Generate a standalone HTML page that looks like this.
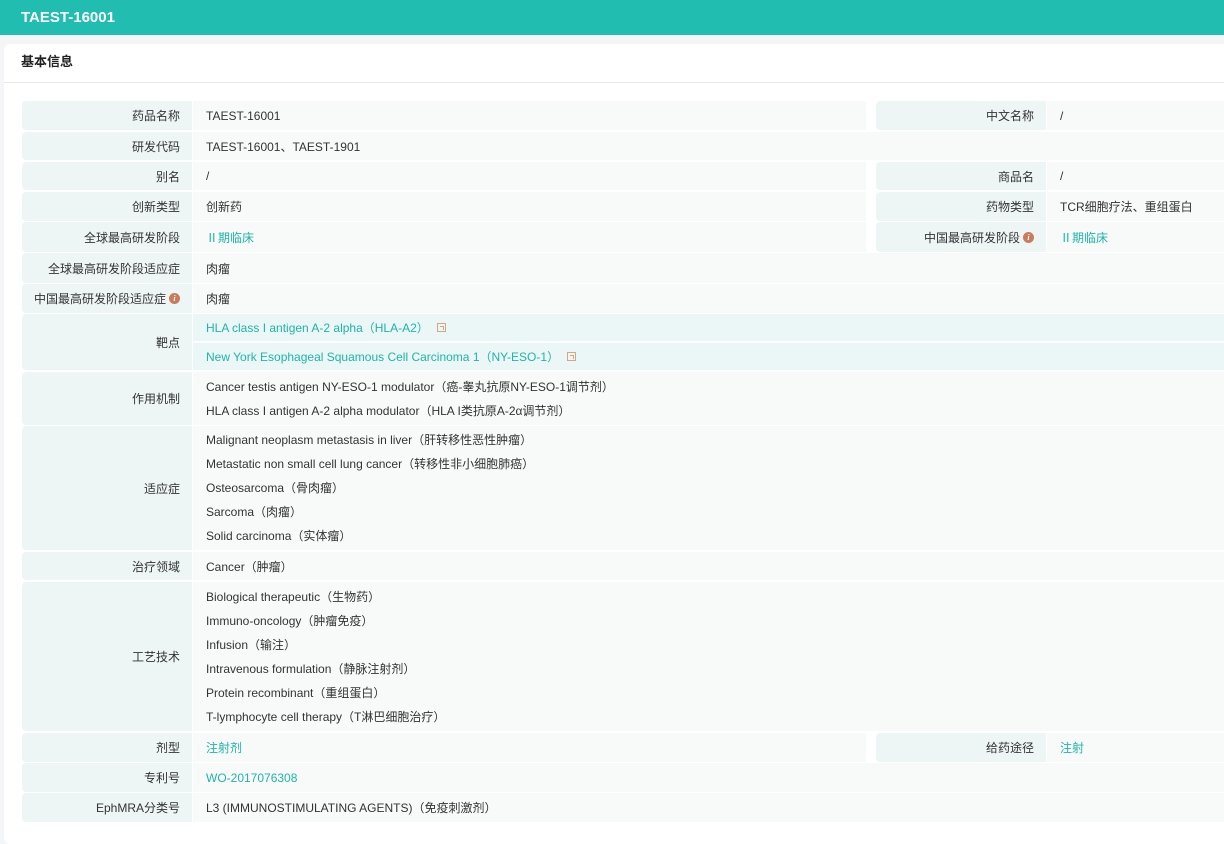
<!DOCTYPE html><html><head><meta charset="utf-8"><style>
*{margin:0;padding:0;box-sizing:border-box}
body{width:1224px;height:834px;background:#f4f5f7;font-family:"Liberation Sans","Noto Sans CJK SC",sans-serif;font-size:12px;color:#333;position:relative;overflow:hidden}
.hd{position:absolute;left:0;top:0;width:1224px;height:35px;background:#20bdb0;color:#fff;font-weight:bold;font-size:15px;line-height:35px;padding-left:21px}
.card{position:absolute;left:4px;top:44px;width:1230px;height:800px;background:#fff;border-radius:6px}
.ct{position:absolute;left:4px;top:44px;width:1220px;height:39px;border-bottom:1px solid #e8e8e8;font-weight:bold;font-size:13px;line-height:36px;padding-left:17px;color:#222}
.l,.v,.r{position:absolute;display:flex;align-items:center}
.l{left:22px;width:170px;background:#eef5f5;justify-content:flex-end;padding-right:12px;border-radius:4px 0 0 4px}
.v{left:193px;width:1031px;background:#f8fafa;padding-left:13px}
.v.h{width:673px}
.rl{left:876px;width:170px}
.rv{left:1047px;width:177px}
.t{color:#1fb5a8}
.ml{flex-direction:column;align-items:flex-start;justify-content:center}
.ml div{line-height:24px}
.i{display:inline-block;width:11px;height:11px;border-radius:50%;background:#c97b5a;color:#fff;font-size:8px;font-style:italic;font-weight:bold;text-align:center;line-height:11px;margin-left:3px;font-family:"Liberation Serif",serif}
.ex{display:inline-block;width:9px;height:9px;border:1px solid #d9a47f;margin-left:8px;position:relative;top:0}
.ex:after{content:"";position:absolute;left:2px;top:2px;width:3px;height:3px;border-top:1px solid #d9a47f;border-right:1px solid #d9a47f}
</style></head><body>
<div class="hd">TAEST-16001</div>
<div class="card"></div>
<div class="ct">基本信息</div>

<div class="l" style="top:101px;height:29px">药品名称</div><div class="v h" style="top:101px;height:29px">TAEST-16001</div>
<div class="l rl" style="top:101px;height:29px">中文名称</div><div class="v rv" style="top:101px;height:29px">/</div>

<div class="l" style="top:132px;height:28px">研发代码</div><div class="v" style="top:132px;height:28px">TAEST-16001、TAEST-1901</div>

<div class="l" style="top:162px;height:28px">别名</div><div class="v h" style="top:162px;height:28px">/</div>
<div class="l rl" style="top:162px;height:28px">商品名</div><div class="v rv" style="top:162px;height:28px">/</div>

<div class="l" style="top:192px;height:29px">创新类型</div><div class="v h" style="top:192px;height:29px">创新药</div>
<div class="l rl" style="top:192px;height:29px">药物类型</div><div class="v rv" style="top:192px;height:29px">TCR细胞疗法、重组蛋白</div>

<div class="l" style="top:222px;height:30px">全球最高研发阶段</div><div class="v h t" style="top:222px;height:30px">Ⅱ期临床</div>
<div class="l rl" style="top:222px;height:30px">中国最高研发阶段<span class="i">i</span></div><div class="v rv t" style="top:222px;height:30px">Ⅱ期临床</div>

<div class="l" style="top:253px;height:30px">全球最高研发阶段适应症</div><div class="v" style="top:253px;height:30px">肉瘤</div>
<div class="l" style="top:284px;height:29px">中国最高研发阶段适应症<span class="i">i</span></div><div class="v" style="top:284px;height:29px">肉瘤</div>

<div class="l" style="top:314px;height:56px">靶点</div>
<div class="v t" style="top:314px;height:28px;background:#ebf6f6;border-bottom:1px solid #fff">HLA class I antigen A-2 alpha（HLA-A2）<span class="ex"></span></div>
<div class="v t" style="top:343px;height:27px;background:#ebf6f6">New York Esophageal Squamous Cell Carcinoma 1（NY-ESO-1）<span class="ex"></span></div>

<div class="l" style="top:372px;height:53px">作用机制</div>
<div class="v ml" style="top:372px;height:53px"><div>Cancer testis antigen NY-ESO-1 modulator（癌-睾丸抗原NY-ESO-1调节剂）</div><div>HLA class I antigen A-2 alpha modulator（HLA I类抗原A-2α调节剂）</div></div>

<div class="l" style="top:426px;height:124px">适应症</div>
<div class="v ml" style="top:426px;height:124px"><div>Malignant neoplasm metastasis in liver（肝转移性恶性肿瘤）</div><div>Metastatic non small cell lung cancer（转移性非小细胞肺癌）</div><div>Osteosarcoma（骨肉瘤）</div><div>Sarcoma（肉瘤）</div><div>Solid carcinoma（实体瘤）</div></div>

<div class="l" style="top:552px;height:28px">治疗领域</div><div class="v" style="top:552px;height:28px">Cancer（肿瘤）</div>

<div class="l" style="top:582px;height:149px">工艺技术</div>
<div class="v ml" style="top:582px;height:149px"><div>Biological therapeutic（生物药）</div><div>Immuno-oncology（肿瘤免疫）</div><div>Infusion（输注）</div><div>Intravenous formulation（静脉注射剂）</div><div>Protein recombinant（重组蛋白）</div><div>T-lymphocyte cell therapy（T淋巴细胞治疗）</div></div>

<div class="l" style="top:733px;height:29px">剂型</div><div class="v h t" style="top:733px;height:29px">注射剂</div>
<div class="l rl" style="top:733px;height:29px">给药途径</div><div class="v rv t" style="top:733px;height:29px">注射</div>

<div class="l" style="top:763px;height:29px">专利号</div><div class="v t" style="top:763px;height:29px">WO-2017076308</div>
<div class="l" style="top:793px;height:29px">EphMRA分类号</div><div class="v" style="top:793px;height:29px">L3 (IMMUNOSTIMULATING AGENTS)（免疫刺激剂）</div>
</body></html>
